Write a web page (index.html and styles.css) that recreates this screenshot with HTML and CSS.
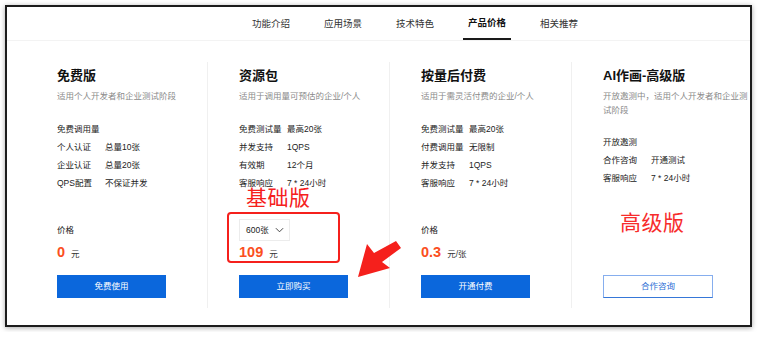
FILE: index.html
```html
<!DOCTYPE html>
<html lang="zh-CN">
<head>
    <meta charset="UTF-8" />
    <meta name="viewport" content="width=device-width, initial-scale=1.0" />
    <title>产品价格</title>
    <link rel="stylesheet" href="styles.css">
</head>
<body>

<div class="shot">
    <div class="window">
        <header class="topnav">
            <nav>
                <a href="#">功能介绍</a>
                <a href="#">应用场景</a>
                <a href="#">技术特色</a>
                <a href="#" class="active">产品价格</a>
                <a href="#">相关推荐</a>
            </nav>
        </header>

        <section class="plans">
            <div class="plan">
                <h2>免费版</h2>
                <p class="desc">适用个人开发者和企业测试阶段</p>
                <ul class="specs">
                    <li class="head">免费调用量</li>
                    <li><span>个人认证</span>总量10张</li>
                    <li><span>企业认证</span>总量20张</li>
                    <li><span>QPS配置</span>不保证并发</li>
                </ul>
                <div class="price-box">
                    <div class="price-head">价格</div>
                    <div class="price"><b>0</b>元</div>
                    <a href="#" class="btn">免费使用</a>
                </div>
            </div>

            <div class="plan">
                <h2>资源包</h2>
                <p class="desc">适用于调用量可预估的企业/个人</p>
                <ul class="specs">
                    <li><span>免费测试量</span>最高20张</li>
                    <li><span>并发支持</span>1QPS</li>
                    <li><span>有效期</span>12个月</li>
                    <li><span>客服响应</span>7 * 24小时</li>
                </ul>
                <div class="price-box">
                    <div class="price-head">
                        <div class="select">600张
                            <svg viewBox="0 0 10 6" width="9" height="6"><path d="M1 1l4 4 4-4" fill="none" stroke="#333" stroke-width="1"/></svg>
                        </div>
                    </div>
                    <div class="price"><b>109</b>元</div>
                    <a href="#" class="btn">立即购买</a>
                </div>
            </div>

            <div class="plan">
                <h2>按量后付费</h2>
                <p class="desc">适用于需灵活付费的企业/个人</p>
                <ul class="specs">
                    <li><span>免费测试量</span>最高20张</li>
                    <li><span>付费调用量</span>无限制</li>
                    <li><span>并发支持</span>1QPS</li>
                    <li><span>客服响应</span>7 * 24小时</li>
                </ul>
                <div class="price-box">
                    <div class="price-head">价格</div>
                    <div class="price"><b>0.3</b>元/张</div>
                    <a href="#" class="btn">开通付费</a>
                </div>
            </div>

            <div class="plan last">
                <h2>AI作画-高级版</h2>
                <p class="desc">开放邀测中，适用个人开发者和企业测试阶段</p>
                <ul class="specs">
                    <li class="head">开放邀测</li>
                    <li><span>合作咨询</span>开通测试</li>
                    <li><span>客服响应</span>7 * 24小时</li>
                </ul>
                <div class="price-box">
                    <a href="#" class="btn outline">合作咨询</a>
                </div>
            </div>
        </section>

        <!-- 标注 -->
        <div class="note note-basic">基础版</div>
        <div class="note-frame"></div>
        <div class="note note-pro">高级版</div>
        <svg class="note-arrow" viewBox="7 7 745 320" width="745" height="320">
            <polygon points="358,277 367,244 374,253 396,241 401,248 382,262 390,268" fill="#f5201c"/>
        </svg>
    </div>
</div>

</body>
</html>
```

FILE: styles.css
```css
:root {
    --blue: #0b67dc;
    --orange: #fb4f1e;
    --red: #f5201c;
    --text: #222;
    --muted: #8a8a8a;
    --line: #f0f0f0;
}

* {
    box-sizing: border-box;
    margin: 0;
    padding: 0;
}

body {
    font-family: "Liberation Sans", "Noto Sans CJK SC", sans-serif;
    background: #fff;
    color: var(--text);
}

.shot {
    padding: 5px;
}

/* 截图窗口 */
.window {
    position: relative;
    width: 747px;
    height: 322px;
    border: 2px solid #1c1c1c;
    box-shadow: 0 1px 5px rgba(0, 0, 0, 0.35);
    background: #fff;
    overflow: hidden;
}

.topnav {
    height: 34px;
    border-bottom: 1px solid #f3f3f3;
}

.topnav nav {
    display: flex;
    gap: 24px;
    padding-left: 240px;
    height: 33px;
}

.topnav a {
    display: block;
    padding: 0 5px;
    line-height: 33px;
    font-size: 9.5px;
    color: #333;
    text-decoration: none;
}

.topnav a.active {
    color: #111;
    font-weight: 700;
    border-bottom: 2px solid #1a1a1a;
    line-height: 31px;
    padding-top: 0;
}

/* 价格卡片 */
.plans {
    display: grid;
    grid-template-columns: repeat(4, 151px);
    column-gap: 31px;
    padding-left: 50px;
    margin-top: 21px;
}

.plan {
    height: 246px;
    padding-top: 6px;
    padding-bottom: 10px;
    border-right: 1px solid var(--line);
    display: flex;
    flex-direction: column;
}

.plan.last {
    border-right: none;
}

.plan h2 {
    font-size: 13px;
    line-height: 16px;
    font-weight: 700;
    color: #111;
}

.desc {
    margin-top: 6px;
    font-size: 8.5px;
    line-height: 13.5px;
    color: var(--muted);
}

.specs {
    list-style: none;
    margin-top: 16px;
    font-size: 8.5px;
    line-height: 18px;
    color: #222;
}

.specs span {
    display: inline-block;
    width: 48px;
}

.price-box {
    margin-top: auto;
}

.price-head {
    height: 22px;
    margin-bottom: 2px;
    font-size: 8.5px;
    line-height: 22px;
}

.select {
    display: flex;
    align-items: center;
    justify-content: space-between;
    width: 51px;
    height: 22px;
    padding: 0 5px 0 6px;
    border: 1px solid #ececec;
    font-size: 8.5px;
}

.price {
    height: 18px;
    line-height: 18px;
    margin-bottom: 14px;
    font-size: 8.5px;
    color: #333;
}

.price b {
    font-size: 14.5px;
    color: var(--orange);
    margin-right: 6px;
}

.btn {
    display: block;
    width: 109px;
    height: 23px;
    line-height: 23px;
    text-align: center;
    font-size: 8.5px;
    color: #fff;
    background: var(--blue);
    text-decoration: none;
}

.btn.outline {
    width: 110px;
    background: #fff;
    color: #2d6fd6;
    border: 1px solid #86aeee;
    border-bottom-color: #3677d8;
    line-height: 21px;
}

/* 红色标注 */
.note {
    position: absolute;
    font-size: 21px;
    line-height: 24px;
    color: var(--red);
    letter-spacing: 0.5px;
}

.note-basic {
    left: 239px;
    top: 179px;
}

.note-pro {
    left: 613px;
    top: 204px;
    color: #f72c2c;
}

.note-frame {
    position: absolute;
    left: 220px;
    top: 205px;
    width: 113px;
    height: 51px;
    border: 2.5px solid var(--red);
    border-radius: 4px;
}

.note-arrow {
    position: absolute;
    left: 0;
    top: 0;
}
```
